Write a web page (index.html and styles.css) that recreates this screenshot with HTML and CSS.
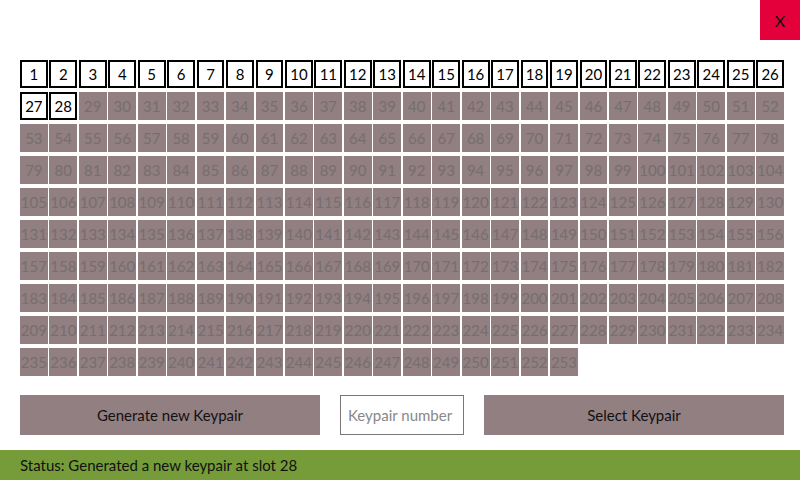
FILE: index.html
```html
<!DOCTYPE html>
<html>
<head>
<meta charset="utf-8">
<link rel="stylesheet" href="styles.css">
</head>
<body>
<div class="app">
  <div class="topbar"><button class="close">X</button></div>
  <div class="grid" id="grid"></div>
  <div class="controls">
    <button class="btn">Generate new Keypair</button>
    <input class="field" type="text" placeholder="Keypair number">
    <button class="btn">Select Keypair</button>
  </div>
  <div class="status">Status: Generated a new keypair at slot 28</div>
</div>
<script src="app.js"></script>
</body>
</html>
```
FILE: styles.css
```css
* { box-sizing: border-box; }
html, body { margin: 0; padding: 0; background: #fff; }
body { font-family: "Lato", "Noto Sans", sans-serif; color: #111; }
.app { width: 800px; height: 480px; display: flex; flex-direction: column; }
.topbar { height: 60px; display: flex; justify-content: flex-end; align-items: flex-start; }
.close { width: 40px; height: 40px; border: none; background: #e4003a; color: #111; font-family: inherit; font-size: 16px; padding: 0; }
.grid { margin: 0 16px 0 20px; display: grid; grid-template-columns: repeat(26, 1fr); grid-auto-rows: 28px; column-gap: 1.7px; row-gap: 4px; height: 316px; align-content: start; }
.cell { display: flex; align-items: center; justify-content: center; font-size: 15px; background: #917f82; color: #766e6f; }
.cell.used { background: #fff; border: 2px solid #000; color: #000; }
.controls { margin-top: 19px; padding: 0 16px 0 20px; display: flex; gap: 20px; height: 40px; }
.btn { width: 300px; height: 40px; border: none; background: #917f82; color: #111; font-family: inherit; font-size: 15px; padding: 0; }
.field { width: 124px; height: 40px; border: 1px solid #777; background: #fff; font-family: inherit; font-size: 15px; padding: 0 7px; color: #111; }
.field::placeholder { color: #888; }
.status { margin-top: 15px; height: 30px; background: #769c3a; display: flex; align-items: center; padding-left: 20px; font-size: 15px; color: #111; }
```
FILE: app.js
```js
var g = document.getElementById('grid');
for (var i = 1; i <= 253; i++) {
  var d = document.createElement('div');
  d.className = 'cell' + (i <= 28 ? ' used' : '');
  d.textContent = i;
  g.appendChild(d);
}
```
